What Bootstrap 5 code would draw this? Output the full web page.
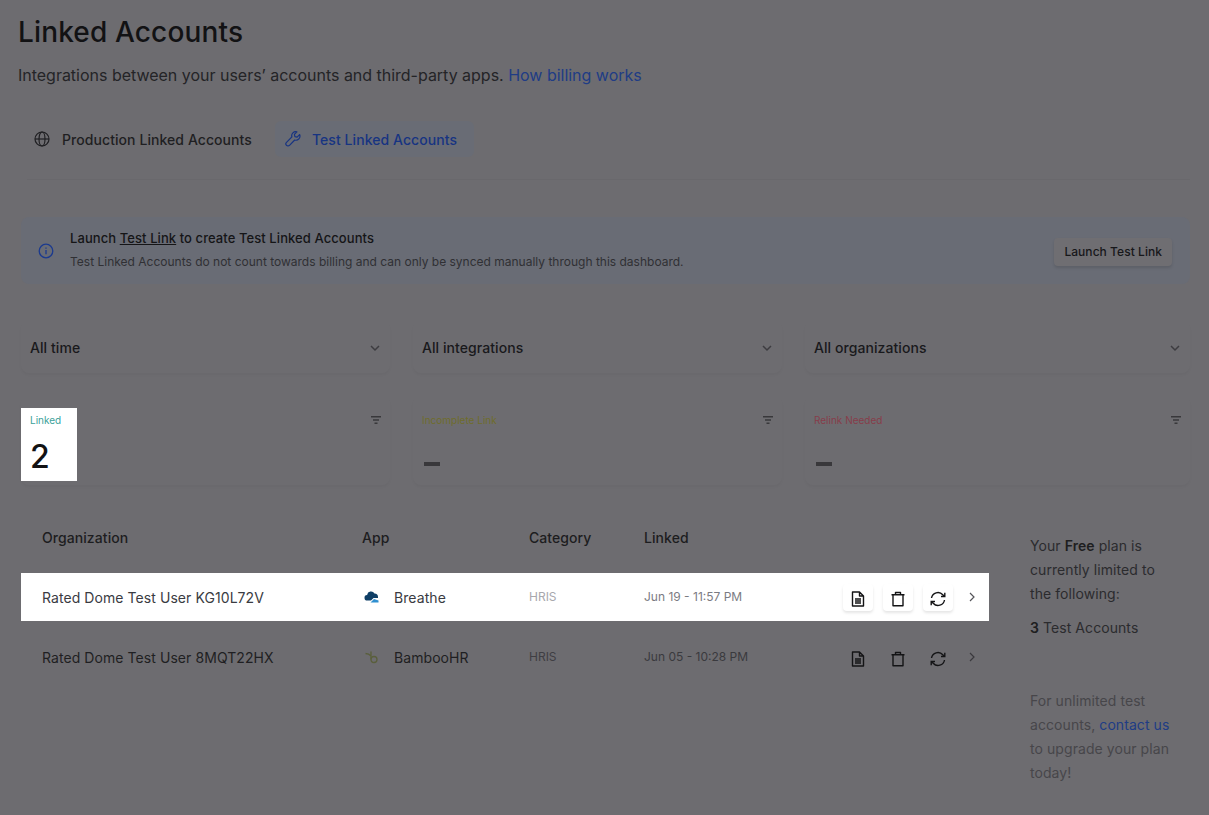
<!DOCTYPE html>
<html lang="en">
<head>
  <meta charset="UTF-8">
  <meta name="viewport" content="width=device-width, initial-scale=1">
  <title>Linked Accounts</title>
  <link href="https://cdn.jsdelivr.net/npm/bootstrap@5.3.0/dist/css/bootstrap.min.css" rel="stylesheet">
  <style>
    body { background: #6d6c70; color: #1a1a1d; font-family: Inter, "Liberation Sans", sans-serif; font-size: 14px; letter-spacing: .07px; height: 815px; overflow: hidden; }
    .page { padding: 0 19px 0 21px; }
    h1.title { font-size: 28px; font-weight: 500; line-height: 34px; margin: 15px 0 0 -3px; color: #121214; letter-spacing: .15px; }
    .sub { font-size: 16px; line-height: 24px; margin: 14px 0 0 -3px; color: #242427; letter-spacing: -.015px; }
    .sub a, .note a { color: #203c85; text-decoration: none; }
    .tabs { margin-top: 34px; gap: 2px; height: 36px; }
    .tab { display: flex; align-items: center; gap: 12px; padding: 0 15px 0 13px; font-weight: 500; height: 36px; color: #1f1f22; text-decoration: none; border-radius: 6px; }
    .tab.active { background: #696c75; color: #173482; margin-left: 6px; padding: 0 17px 0 10px; gap: 11px; }
    .rule { height: 1px; background: #69686c; margin: 22px 0 37px 6px; }
    .banner { background: #696c75; border-radius: 8px; height: 67px; padding: 0 18px 0 17px; }
    .banner .t1 { font-weight: 500; font-size: 13px; line-height: 20px; color: #151517; letter-spacing: .08px; margin-top: -2px; }
    .banner .t1 a { color: inherit; }
    .banner .t2 { font-size: 12px; line-height: 20px; color: #303034; margin-top: 4px; letter-spacing: 0; }
    .btn-launch { background: #6f6e72; border: 0; font-size: 12px; font-weight: 500; letter-spacing: .05px; color: #17171a; padding: 0 10px; height: 28px; box-shadow: 0 2px 3px rgba(0,0,0,.12); border-radius: 4px; margin-top: 3px; }
    .filters { display: grid; grid-template-columns: 369px 369px 1fr; gap: 23px; margin-top: 37px; }
    .filter { height: 52px; padding: 0 9px; border-radius: 8px; font-weight: 500; color: #19191c; box-shadow: 0 2px 3px rgba(0,0,0,.03); padding-top: 1px; }
    .stats { display: grid; grid-template-columns: 369px 369px 1fr; gap: 23px; margin-top: 23px; }
    .stat { height: 89px; border-radius: 8px; box-shadow: 0 2px 3px rgba(0,0,0,.03); padding-top: 12px; }
    .stat-box { width: 56px; height: 73px; padding: 6px 9px; }
    .stat-box.lit { background: #fff; }
    .stat-label { font-size: 10px; line-height: 13px; white-space: nowrap; letter-spacing: 0; }
    .stat-num { font-size: 32px; font-weight: 500; line-height: 40px; margin-top: 10px; color: #121214; }
    .dash { width: 16px; height: 4px; background: #39383b; margin: 35px 0 0 2px; }
    .filter-ic { margin: 8px 9px 0 0; }
    .main { display: flex; margin-top: 24px; }
    .table-wrap { width: 968px; }
    .table.accts { --bs-table-bg: transparent; --bs-table-color: #1f1f22; table-layout: fixed; width: 968px; border-collapse: separate; border-spacing: 0 12px; margin: 0; }
    .accts th, .accts td { border: 0; padding: 0; vertical-align: middle; }
    .accts th { font-weight: 500; height: 40px; padding-bottom: 7px; color: #1d1d20; }
    .accts td { height: 48px; }
    .accts .pl { padding-left: 21px; }
    .accts tbody tr.lit td { background: #fff; color: #3a3b42; }
    .cat { font-size: 12px; color: #3f3e43 !important; letter-spacing: 0; }
    .when { font-size: 12px; color: #3a3a3e !important; letter-spacing: 0; }
    tr.lit .cat { color: #a8a8ad !important; }
    tr.lit .when { color: #7b7b82 !important; }
    .app-ic { width: 16px; height: 16px; margin: 0 14px 0 2px; }
    .acts { display: flex; align-items: center; gap: 10px; }
    .act { width: 30px; height: 27px; padding: 0; border: 0; background: transparent; border-radius: 4px; color: #141416; }
    tr.lit .act { background: #fff; box-shadow: 0 2px 3px rgba(0,0,0,.1); }
    .chev { margin-left: 5px; color: #3a393d; }
    tr.lit .chev { color: #55555a; }
    .side { width: 186px; padding: 25px 0 0 41px; line-height: 24px; color: #2b2b2e; }
    .side p { margin: 0; }
    .side b { font-weight: 600; color: #1e1e20; }
    .side .lim { margin-top: 10px; }
    .side .note { margin-top: 49px; color: #47464a; }
  </style>
</head>
<body>
  <div class="page">
    <h1 class="title">Linked Accounts</h1>
    <p class="sub mb-0">Integrations between your users’ accounts and third-party apps. <a href="#">How billing works</a></p>

    <!-- tabs -->
    <div class="tabs d-flex">
      <a class="tab" href="#">
        <svg width="16" height="16" viewBox="0 0 16 16" fill="none" stroke="currentColor" stroke-width="1.2"><circle cx="8" cy="8" r="7"/><ellipse cx="8" cy="8" rx="3" ry="7"/><path d="M1 8h14"/></svg>
        Production Linked Accounts
      </a>
      <a class="tab active" href="#">
        <svg width="16" height="16" viewBox="0 0 16 16" fill="none" stroke="currentColor" stroke-width="1.2" stroke-linejoin="round"><path d="M14.6 3.6l-2.5 2.5-2.2-.5-.5-2.2 2.5-2.5a4 4 0 0 0-5 5L1.5 11.300a2 2 0 0 0 3 3L9.700 9a4 4 0 0 0 4.900-5.400z"/></svg>
        Test Linked Accounts
      </a>
    </div>
    <div class="rule"></div>

    <!-- banner -->
    <div class="banner d-flex align-items-center">
      <svg class="me-3 flex-shrink-0" width="16" height="16" viewBox="0 0 16 16" fill="none" stroke="#1b3a8f" stroke-width="1.300"><circle cx="8" cy="8" r="6.800"/><path d="M8 7v4.200M8 4.500v1.200"/></svg>
      <div class="flex-grow-1">
        <div class="t1">Launch <a href="#">Test Link</a> to create Test Linked Accounts</div>
        <div class="t2">Test Linked Accounts do not count towards billing and can only be synced manually through this dashboard.</div>
      </div>
      <button class="btn btn-launch" type="button">Launch Test Link</button>
    </div>

    <!-- filters -->
    <div class="filters">
      <div class="filter d-flex align-items-center justify-content-between">All time
        <svg width="12" height="12" viewBox="0 0 12 12" fill="none" stroke="#3d3c40" stroke-width="1.500"><path d="M2 4l4 4 4-4"/></svg></div>
      <div class="filter d-flex align-items-center justify-content-between">All integrations
        <svg width="12" height="12" viewBox="0 0 12 12" fill="none" stroke="#3d3c40" stroke-width="1.500"><path d="M2 4l4 4 4-4"/></svg></div>
      <div class="filter d-flex align-items-center justify-content-between">All organizations
        <svg width="12" height="12" viewBox="0 0 12 12" fill="none" stroke="#3d3c40" stroke-width="1.500"><path d="M2 4l4 4 4-4"/></svg></div>
    </div>

    <!-- stats -->
    <div class="stats">
      <div class="stat d-flex justify-content-between">
        <div class="stat-box lit">
          <div class="stat-label" style="color:#3aa19a">Linked</div>
          <div class="stat-num">2</div>
        </div>
        <svg class="filter-ic" width="10" height="8" viewBox="0 0 10 8" fill="#39383b"><path d="M0 0h10v1.600H0zM2 3.200h6v1.600H2zM3.500 6.400h3V8h-3z"/></svg>
      </div>
      <div class="stat d-flex justify-content-between">
        <div class="stat-box">
          <div class="stat-label" style="color:#6f6c2c">Incomplete Link</div>
          <div class="dash"></div>
        </div>
        <svg class="filter-ic" width="10" height="8" viewBox="0 0 10 8" fill="#39383b"><path d="M0 0h10v1.600H0zM2 3.200h6v1.600H2zM3.500 6.400h3V8h-3z"/></svg>
      </div>
      <div class="stat d-flex justify-content-between">
        <div class="stat-box">
          <div class="stat-label" style="color:#873c4a">Relink Needed</div>
          <div class="dash"></div>
        </div>
        <svg class="filter-ic" width="10" height="8" viewBox="0 0 10 8" fill="#39383b"><path d="M0 0h10v1.600H0zM2 3.200h6v1.600H2zM3.500 6.400h3V8h-3z"/></svg>
      </div>
    </div>

    <div class="main">
      <div class="table-wrap">
        <table class="table accts">
          <colgroup><col style="width:341px"><col style="width:167px"><col style="width:115px"><col style="width:199px"><col></colgroup>
          <thead>
            <tr><th class="pl">Organization</th><th>App</th><th>Category</th><th>Linked</th><th></th></tr>
          </thead>
          <tbody>
            <tr class="lit">
              <td class="pl">Rated Dome Test User KG10L72V</td>
              <td><div class="d-flex align-items-center">
                <svg class="app-ic" viewBox="0 0 16 16"><path fill="#0f3f66" d="M3.500 11.500a2.800 2.800 0 0 1-.4-5.600A4 4 0 0 1 10.500 4.500 3.500 3.500 0 0 1 14 8v1H9.500L7 11.500z"/><path fill="#2f8fd0" d="M6.500 13.500L10 10l4.500 1.500v2z"/></svg>
                Breathe</div></td>
              <td class="cat">HRIS</td>
              <td class="when">Jun 19 - 11:57 PM</td>
              <td>
                <div class="acts">
                  <button class="act" type="button"><svg width="16" height="16" viewBox="0 0 16 16" fill="none" stroke="currentColor" stroke-width="1.400" stroke-linejoin="round"><path d="M2.500 1h7L13.500 5v10h-11zM9.500 1v4h4M5 8h6M5 10h6M5 12h6"/></svg></button>
                  <button class="act" type="button"><svg width="16" height="16" viewBox="0 0 16 16" fill="none" stroke="currentColor" stroke-width="1.400" stroke-linejoin="round"><path d="M1.500 3.800h13M3 3.800v11h10v-11M5.500 3.800V1.500h5v2.300"/></svg></button>
                  <button class="act" type="button"><svg width="16" height="16" viewBox="0 0 16 16" fill="none" stroke="currentColor" stroke-width="1.400"><path d="M1.500 7a6.500 6.500 0 0 1 11.300-3.200L14.800 5.500M14.800 1.800v3.700H11M14.500 9a6.500 6.500 0 0 1-11.300 3.200L1.200 10.500M1.200 14.200v-3.700H5"/></svg></button>
                  <svg class="chev" width="8" height="10" viewBox="0 0 8 10" fill="none" stroke="currentColor" stroke-width="1.200"><path d="M2 1l4 4-4 4"/></svg>
                </div>
              </td>
            </tr>
            <tr>
              <td class="pl">Rated Dome Test User 8MQT22HX</td>
              <td><div class="d-flex align-items-center">
                <svg class="app-ic" viewBox="0 0 16 16" fill="none" stroke="#5a5f3c" stroke-width="1.300"><path d="M1.500 4.500c2.500 0 4 .8 5.500 2.500M7 2.500v8"/><circle cx="10" cy="10.500" r="3"/></svg>
                BambooHR</div></td>
              <td class="cat">HRIS</td>
              <td class="when">Jun 05 - 10:28 PM</td>
              <td>
                <div class="acts">
                  <button class="act" type="button"><svg width="16" height="16" viewBox="0 0 16 16" fill="none" stroke="currentColor" stroke-width="1.400" stroke-linejoin="round"><path d="M2.500 1h7L13.500 5v10h-11zM9.500 1v4h4M5 8h6M5 10h6M5 12h6"/></svg></button>
                  <button class="act" type="button"><svg width="16" height="16" viewBox="0 0 16 16" fill="none" stroke="currentColor" stroke-width="1.400" stroke-linejoin="round"><path d="M1.500 3.800h13M3 3.800v11h10v-11M5.500 3.800V1.500h5v2.300"/></svg></button>
                  <button class="act" type="button"><svg width="16" height="16" viewBox="0 0 16 16" fill="none" stroke="currentColor" stroke-width="1.400"><path d="M1.500 7a6.500 6.500 0 0 1 11.300-3.200L14.800 5.500M14.800 1.800v3.700H11M14.500 9a6.500 6.500 0 0 1-11.300 3.200L1.200 10.500M1.200 14.200v-3.700H5"/></svg></button>
                  <svg class="chev" width="8" height="10" viewBox="0 0 8 10" fill="none" stroke="currentColor" stroke-width="1.200"><path d="M2 1l4 4-4 4"/></svg>
                </div>
              </td>
            </tr>
          </tbody>
        </table>
      </div>
      <aside class="side">
        <p>Your <b>Free</b> plan is currently limited to the following:</p>
        <p class="lim"><b>3</b> Test Accounts</p>
        <p class="note">For unlimited test accounts, <a href="#">contact us</a> to upgrade your plan today!</p>
      </aside>
    </div>
  </div>
  <script src="https://cdn.jsdelivr.net/npm/bootstrap@5.3.0/dist/js/bootstrap.bundle.min.js"></script>
</body>
</html>
